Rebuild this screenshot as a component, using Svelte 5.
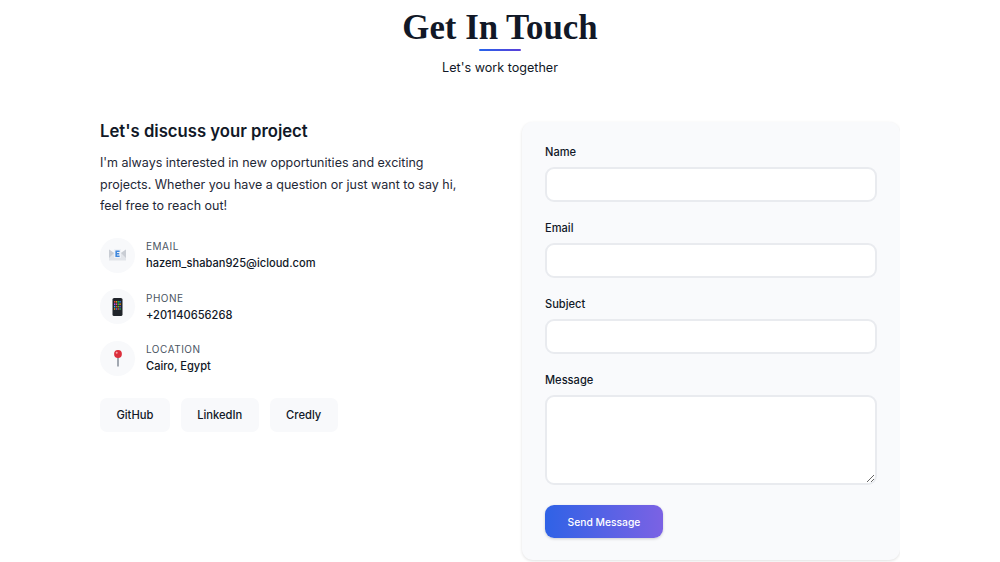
<script>
	const contacts = [
		{ kind: 'mail', label: 'Email', value: 'hazem_shaban925@icloud.com' },
		{ kind: 'phone', label: 'Phone', value: '+201140656268' },
		{ kind: 'pin', label: 'Location', value: 'Cairo, Egypt' }
	];
	const links = ['GitHub', 'LinkedIn', 'Credly'];
	const fields = ['Name', 'Email', 'Subject'];
	const keypad = ['#ef4444', '#f59e0b', '#22c55e', '#3b82f6', '#a855f7', '#ec4899', '#22c55e', '#f59e0b', '#38bdf8', '#ef4444', '#84cc16', '#6366f1', '#f59e0b', '#3b82f6', '#ef4444', '#22c55e'];
</script>

<section class="contact">
	<header class="head">
		<h1>Get In Touch</h1>
		<div class="rule"></div>
		<p>Let's work together</p>
	</header>

	<div class="columns">
		<div class="info">
			<h2>Let's discuss your project</h2>
			<p class="intro">
				I'm always interested in new opportunities and exciting projects. Whether you have a
				question or just want to say hi, feel free to reach out!
			</p>

			<ul class="items">
				{#each contacts as item}
					<li>
						<span class="icon">
							{#if item.kind === 'mail'}
								<svg width="17" height="12" viewBox="0 0 17 12" aria-hidden="true">
									<path d="M0 0.5 L8.5 6 L17 0.5 L17 11.5 L0 11.5 Z" fill="#e2e5ea" />
									<path d="M0 0.5 L5 4 L0 9 Z" fill="#c9cdd4" />
									<path d="M17 0.5 L12 4 L17 9 Z" fill="#c9cdd4" />
									<rect x="5" y="0" width="7" height="9" fill="#eef1f6" />
									<path d="M6.4 1.5 H10.6 V3 H8 V4 H10.2 V5.4 H8 V6.4 H10.6 V8 H6.4 Z" fill="#3f87dc" />
								</svg>
							{:else if item.kind === 'phone'}
								<svg width="11" height="18" viewBox="0 0 11 18" aria-hidden="true">
									<rect x="0.5" y="0" width="10" height="18" rx="1.6" fill="#20242a" />
									{#each keypad as colour, i}
										<rect x={2 + (i % 4) * 1.8} y={3 + Math.floor(i / 4) * 2.4} width="1.3" height="1.6" fill={colour} />
									{/each}
								</svg>
							{:else}
								<svg width="10" height="17" viewBox="0 0 10 17" aria-hidden="true">
									<rect x="4.4" y="6" width="1.2" height="10.5" fill="#6b7280" />
									<circle cx="5" cy="4" r="3.9" fill="#dc2f3c" />
									<circle cx="3.7" cy="2.8" r="1" fill="#f3a3a8" />
								</svg>
							{/if}
						</span>
						<div class="text">
							<span class="label">{item.label}</span>
							<span class="value">{item.value}</span>
						</div>
					</li>
				{/each}
			</ul>

			<div class="links">
				{#each links as link}
					<button type="button">{link}</button>
				{/each}
			</div>
		</div>

		<form class="card">
			{#each fields as field}
				<label class="field">
					<span>{field}</span>
					<input type="text" />
				</label>
			{/each}
			<label class="field">
				<span>Message</span>
				<textarea></textarea>
			</label>
			<button class="send" type="button">Send Message</button>
		</form>
	</div>
</section>

<style>
	:global(body) {
		background: #fff;
		font-family: Inter, 'Liberation Sans', sans-serif;
		color: #111827;
	}

	.contact {
		width: 800px;
		margin: 0 auto;
		height: 562px;
		overflow: hidden;
	}

	.head {
		display: flex;
		flex-direction: column;
		align-items: center;
		padding-top: 7px;
	}

	h1 {
		margin: 0;
		font-family: 'Liberation Serif', serif;
		font-weight: 700;
		font-size: 34.8px;
		line-height: 42px;
		color: #111827;
	}

	.rule {
		width: 42px;
		height: 2px;
		background: linear-gradient(90deg, #2563eb, #5b3fd8);
		border-radius: 1px;
	}

	.head p {
		margin: 9px 0 0;
		font-size: 12.6px;
		line-height: 15px;
		color: #111827;
	}

	.columns {
		display: grid;
		grid-template-columns: 1fr 378px;
		gap: 44px;
		margin-top: 47px;
	}

	h2 {
		margin: 0;
		font-size: 16.7px;
		font-weight: 600;
		line-height: 18px;
		color: #111827;
	}

	.intro {
		margin: 12px 0 0;
		font-size: 12.5px;
		line-height: 21.5px;
		color: #1f2937;
	}

	.items {
		list-style: none;
		margin: 21px 0 0;
		padding: 0;
		display: flex;
		flex-direction: column;
		gap: 16.5px;
	}

	.items li {
		display: flex;
		align-items: center;
		gap: 11px;
	}

	.icon {
		width: 35px;
		height: 35px;
		border-radius: 50%;
		background: #f8f9fb;
		display: flex;
		align-items: center;
		justify-content: center;
	}

	.text {
		display: flex;
		flex-direction: column;
		gap: 3px;
	}

	.label {
		font-size: 10px;
		line-height: 13px;
		letter-spacing: 0.5px;
		text-transform: uppercase;
		color: #4b5563;
	}

	.value {
		font-size: 11.1px;
		font-weight: 500;
		line-height: 14px;
		color: #111827;
	}

	.links {
		display: flex;
		gap: 11px;
		margin-top: 22px;
	}

	.links button {
		height: 34px;
		padding: 0 16.4px;
		border: none;
		border-radius: 7px;
		background: #f8f9fb;
		font-family: inherit;
		font-size: 11.2px;
		font-weight: 500;
		color: #111827;
	}

	.card {
		display: flex;
		flex-direction: column;
		align-items: flex-start;
		gap: 19px;
		padding: 23px 23px 22px;
		border-radius: 11px;
		background: #f9fafc;
		box-shadow: 0 1px 3px rgba(0, 0, 0, 0.12);
	}

	.field {
		display: flex;
		flex-direction: column;
		gap: 7px;
		width: 100%;
	}

	.field span {
		font-size: 11.1px;
		font-weight: 500;
		line-height: 15px;
		color: #111827;
	}

	input,
	textarea {
		display: block;
		box-sizing: border-box;
		width: 100%;
		height: 35px;
		border: 2px solid #e9ebef;
		border-radius: 9px;
		background: #fff;
	}

	textarea {
		height: 90px;
	}

	.send {
		width: 118px;
		height: 33px;
		margin-top: 1px;
		border: none;
		border-radius: 9px;
		background: linear-gradient(90deg, #2f62e6, #7b62e4);
		box-shadow: 0 1px 3px rgba(0, 0, 0, 0.18);
		font-family: inherit;
		font-size: 10.3px;
		font-weight: 500;
		color: #fff;
	}
</style>
